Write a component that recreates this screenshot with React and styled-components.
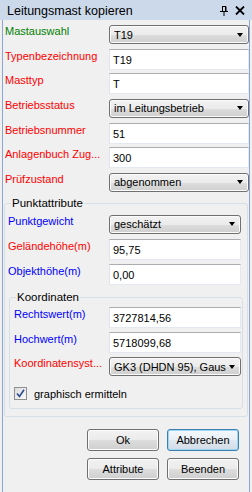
import styled, { createGlobalStyle } from 'styled-components';

const GlobalStyle = createGlobalStyle`
  html, body {
    margin: 0;
    padding: 0;
    background: #f0f0f0;
  }
  body {
    font-family: "Liberation Sans", Arial, sans-serif;
    font-size: 11px;
    color: #000;
  }
`;

const Window = styled.div`
  width: 252px;
  height: 492px;
  display: flex;
  flex-direction: column;
  overflow: hidden;
`;

const TitleBar = styled.div`
  height: 20px;
  flex: none;
  display: flex;
  align-items: center;
  background: #cbd9eb;
  padding: 0 7px;
  font-size: 12.5px;
`;

const Title = styled.span`
  flex: 1;
  padding-top: 1px;
`;

const TitleIcons = styled.div`
  display: flex;
  align-items: center;
  gap: 7px;
  padding-top: 1px;
`;

const Body = styled.div`
  flex: 1;
  margin: 0 2px;
  border-left: 1px solid #8aa6d6;
  border-right: 1px solid #8aa6d6;
  padding-top: 5px;
  display: flex;
  flex-direction: column;
`;

const Rows = styled.div`
  display: grid;
  grid-auto-rows: 19px;
  row-gap: ${({ $gap }) => $gap}px;
  padding: ${({ $pad }) => $pad};
`;

const Row = styled.div`
  display: flex;
  align-items: flex-start;
`;

const Label = styled.span`
  flex: 1;
  line-height: 12px;
  white-space: nowrap;
  overflow: hidden;
  color: ${({ $color }) => $color};
`;

const Input = styled.div`
  box-sizing: border-box;
  width: ${({ $w }) => $w}px;
  height: 21px;
  margin-top: -1px;
  background: #fff;
  border: 1px solid #e3e9ef;
  border-top-color: #abadb3;
  border-left-color: #e2e3ea;
  padding: 3px 3px 0;
  line-height: 14px;
  white-space: nowrap;
  overflow: hidden;
`;

const Combo = styled.div`
  box-sizing: border-box;
  width: ${({ $w }) => $w}px;
  height: 19px;
  display: flex;
  align-items: center;
  border: 1px solid #707070;
  border-radius: 3px;
  background: linear-gradient(#f2f2f2 0%, #ebebeb 50%, #dddddd 51%, #cfcfcf 100%);
  box-shadow: inset 0 0 0 1px #fcfcfc;
  padding: 0 5px 0 4px;
`;

const ComboText = styled.span`
  flex: 1;
  white-space: nowrap;
  overflow: hidden;
`;

const Arrow = styled.span`
  flex: none;
  margin-left: 3px;
  width: 0;
  height: 0;
  border-left: 3.5px solid transparent;
  border-right: 3.5px solid transparent;
  border-top: 4px solid #000;
`;

const Group = styled.fieldset`
  margin: ${({ $margin }) => $margin};
  padding: 0;
  border: 1px solid #d5dfe5;
  border-radius: 3px;
  min-width: 0;
`;

const Legend = styled.legend`
  padding: 0 1px;
  margin-left: ${({ $indent }) => $indent}px;
  line-height: 13px;
  font-size: 11.5px;
`;

const CheckRow = styled.label`
  display: flex;
  align-items: center;
  gap: 7px;
  padding: 11px 0 8px 4px;
`;

const CheckBox = styled.span`
  box-sizing: border-box;
  width: 13px;
  height: 13px;
  border: 1px solid #8e8f8f;
  background: linear-gradient(135deg, #dcdcdc, #fafafa);
  display: flex;
  align-items: center;
  justify-content: center;
`;

const Buttons = styled.div`
  display: grid;
  grid-template-columns: 72px 72px;
  grid-auto-rows: 22px;
  column-gap: 8px;
  row-gap: 7px;
  justify-content: end;
  padding: 12px 10px 0 0;
`;

const Button = styled.button`
  font: inherit;
  color: #000;
  border: 1px solid ${({ $focus }) => ($focus ? '#3c7fb1' : '#707070')};
  border-radius: 3px;
  background: ${({ $focus }) =>
    $focus
      ? 'linear-gradient(#f4f8fb 0%, #e9f0f6 50%, #dfe7ef 51%, #d3dde7 100%)'
      : 'linear-gradient(#f2f2f2 0%, #ebebeb 50%, #dddddd 51%, #cfcfcf 100%)'};
  box-shadow: inset 0 0 0 1px ${({ $focus }) => ($focus ? '#9fd6f4' : '#fcfcfc')};
  padding: 0;
`;

function PinIcon() {
  return (
    <svg width="8" height="10" viewBox="0 0 8 10">
      <path d="M2 0.5h4M2.5 0.5v5M5.5 0.5v5M6 0.5v5M0 5.5h8M4 5.5v4.5" stroke="#000" strokeWidth="1" fill="none" />
    </svg>
  );
}

function CloseIcon() {
  return (
    <svg width="10" height="9" viewBox="0 0 10 9">
      <path d="M1 0.5l8 8M9 0.5l-8 8" stroke="#000" strokeWidth="1.8" fill="none" />
    </svg>
  );
}

function Field({ label, color, value, combo, width }) {
  return (
    <Row>
      <Label $color={color}>{label}</Label>
      {combo ? (
        <Combo $w={width}>
          <ComboText>{value}</ComboText>
          <Arrow />
        </Combo>
      ) : (
        <Input $w={width}>{value}</Input>
      )}
    </Row>
  );
}

const GREEN = '#008000';
const RED = '#ff0000';
const BLUE = '#0000ff';

export default function App() {
  return (
    <Window>
      <GlobalStyle />
      <TitleBar>
        <Title>Leitungsmast kopieren</Title>
        <TitleIcons>
          <PinIcon />
          <CloseIcon />
        </TitleIcons>
      </TitleBar>
      <Body>
        <Rows $gap={5.67} $pad="0 0 0 2px">
          <Field label="Mastauswahl" color={GREEN} value="T19" combo width={140} />
          <Field label="Typenbezeichnung" color={RED} value="T19" width={140} />
          <Field label="Masttyp" color={RED} value="T" width={140} />
          <Field label="Betriebsstatus" color={RED} value="im Leitungsbetrieb" combo width={140} />
          <Field label="Betriebsnummer" color={RED} value="51" width={140} />
          <Field label="Anlagenbuch Zug..." color={RED} value="300" width={140} />
          <Field label="Prüfzustand" color={RED} value="abgenommen" combo width={140} />
        </Rows>
        <Group $margin="5px 1px 0 1px">
          <Legend $indent={6}>Punktattribute</Legend>
          <Rows $gap={6} $pad="5px 6px 0 3px">
            <Field label="Punktgewicht" color={BLUE} value="geschätzt" combo width={132} />
            <Field label="Geländehöhe(m)" color={RED} value="95,75" width={132} />
            <Field label="Objekthöhe(m)" color={BLUE} value="0,00" width={132} />
          </Rows>
          <Group $margin="7.5px 4px 7px 4px">
            <Legend $indent={6}>Koordinaten</Legend>
            <Rows $gap={5.5} $pad="4px 1px 0 4px">
              <Field label="Rechtswert(m)" color={BLUE} value="3727814,56" width={132} />
              <Field label="Hochwert(m)" color={BLUE} value="5718099,68" width={132} />
              <Field label="Koordinatensyst..." color={RED} value="GK3 (DHDN 95), Gauss-Krüger" combo width={132} />
            </Rows>
            <CheckRow>
              <CheckBox>
                <svg width="9" height="9" viewBox="0 0 9 9">
                  <path d="M1 4.5l2.5 3L8 0.8" stroke="#2b4a8f" strokeWidth="1.6" fill="none" />
                </svg>
              </CheckBox>
              graphisch ermitteln
            </CheckRow>
          </Group>
        </Group>
        <Buttons>
          <Button>Ok</Button>
          <Button $focus>Abbrechen</Button>
          <Button>Attribute</Button>
          <Button>Beenden</Button>
        </Buttons>
      </Body>
    </Window>
  );
}
